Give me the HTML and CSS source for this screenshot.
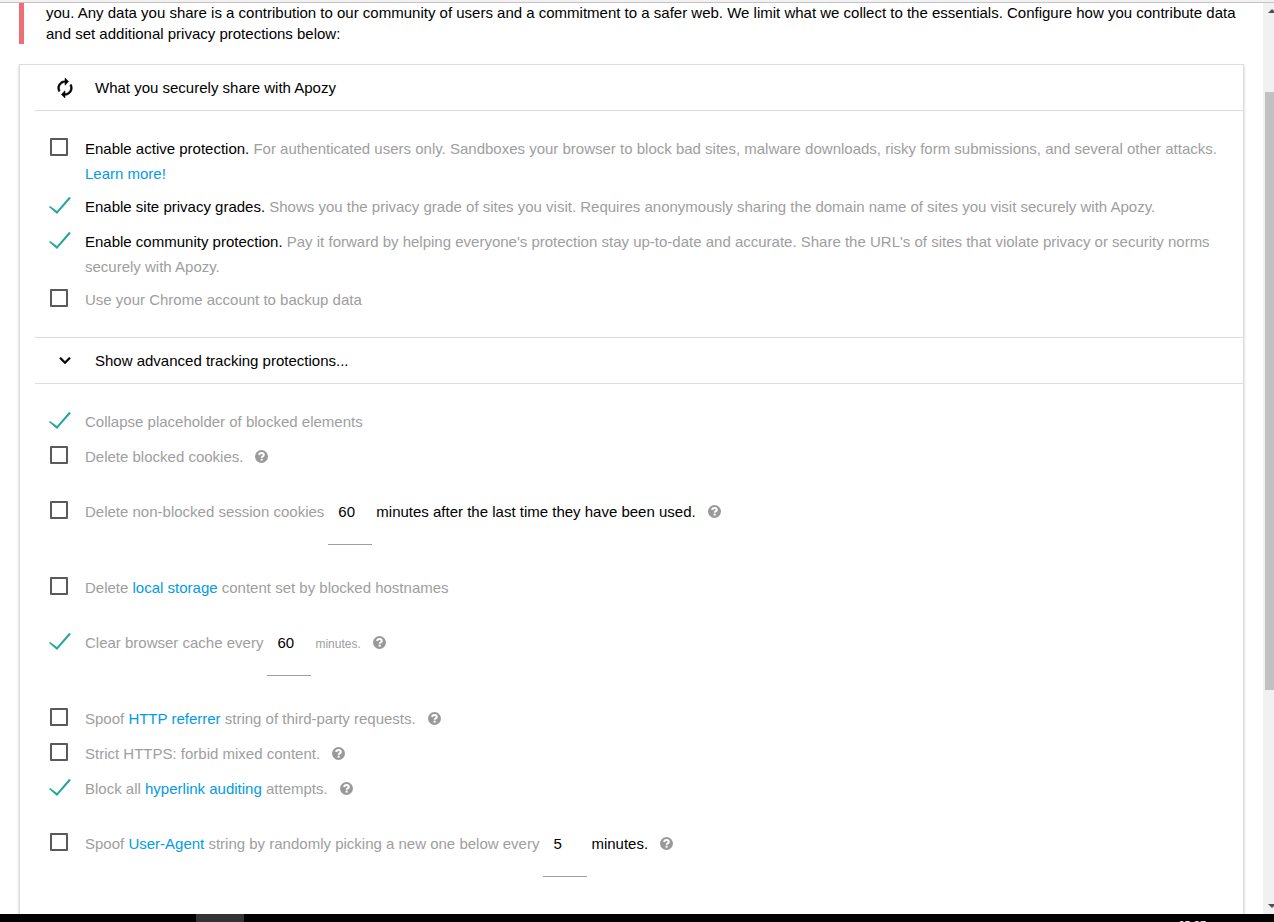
FILE: index.html
```html
<!DOCTYPE html>
<html lang="en">
<head>
<meta charset="utf-8">
<meta name="viewport" content="width=device-width, initial-scale=1">
<title>Apozy settings</title>
<link rel="stylesheet" href="styles.css">
</head>
<body>
<svg class="symbols" aria-hidden="true">
  <symbol id="help" viewBox="0 0 13 13">
    <circle cx="6.5" cy="6.5" r="6.5" fill="#999"/>
    <path d="M4.1 5C4.3 3.600 5.200 3 6.500 3c1.500 0 2.300.8 2.300 1.900 0 1.500-2.100 1.500-2.100 2.900" fill="none" stroke="#fff" stroke-width="2"/>
    <rect x="5.600" y="8.700" width="2.100" height="1.900" fill="#fff"/>
  </symbol>
</svg>
<div class="toolbar-edge"></div>
<div class="viewport">
  <main class="page">
    <blockquote class="intro">you. Any data you share is a contribution to our community of users and a commitment to a safer web. We limit what we collect to the essentials. Configure how you contribute data and set additional privacy protections below:</blockquote>
    <section class="card">
      <button type="button" class="section-head">
        <svg class="head-icon" viewBox="0 0 24 24"><path d="M12 6v3l4-4-4-4v3c-4.420 0-8 3.580-8 8 0 1.570.460 3.030 1.240 4.260L6.700 14.800c-.450-.830-.700-1.790-.700-2.800 0-3.310 2.690-6 6-6zm6.760 1.740L17.300 9.200c.440.840.700 1.790.700 2.800 0 3.310-2.690 6-6 6v-3l-4 4 4 4v-3c4.420 0 8-3.580 8-8 0-1.570-.460-3.030-1.240-4.260z"/></svg>
        <span>What you securely share with Apozy</span>
      </button>
      <div class="options">
        <div class="option wrapped">
          <input type="checkbox" class="check" id="active">
          <div class="text"><label for="active"><span class="strong">Enable active protection.</span> For authenticated users only. Sandboxes your browser to block bad sites, malware downloads, risky form submissions, and several other attacks.</label> <a href="#">Learn more!</a></div>
        </div>
        <div class="option">
          <input type="checkbox" class="check" id="grades" checked>
          <div class="text"><label for="grades"><span class="strong">Enable site privacy grades.</span> Shows you the privacy grade of sites you visit. Requires anonymously sharing the domain name of sites you visit securely with Apozy.</label></div>
        </div>
        <div class="option wrapped">
          <input type="checkbox" class="check" id="community" checked>
          <div class="text"><label for="community"><span class="strong">Enable community protection.</span> Pay it forward by helping everyone's protection stay up-to-date and accurate. Share the URL's of sites that violate privacy or security norms securely with Apozy.</label></div>
        </div>
        <div class="option">
          <input type="checkbox" class="check" id="backup">
          <div class="text"><label for="backup">Use your Chrome account to backup data</label></div>
        </div>
      </div>
      <button type="button" class="section-head ruled">
        <svg class="head-icon" viewBox="0 0 24 24"><path d="M7.410 7.840L12 12.420l4.590-4.580L18 9.250l-6 6-6-6z"/></svg>
        <span>Show advanced tracking protections...</span>
      </button>
      <div class="options">
        <div class="option">
          <input type="checkbox" class="check" id="collapse" checked>
          <div class="text"><label for="collapse">Collapse placeholder of blocked elements</label></div>
        </div>
        <div class="option">
          <input type="checkbox" class="check" id="cookies">
          <div class="text"><label for="cookies">Delete blocked cookies.</label><button type="button" class="help" aria-label="Help"><svg><use href="#help"/></svg></button></div>
        </div>
        <div class="option timed">
          <input type="checkbox" class="check" id="session">
          <div class="text"><label for="session">Delete non-blocked session cookies</label><input type="text" class="minutes" value="60" aria-label="Session cookie minutes"><span class="strong">minutes after the last time they have been used.</span><button type="button" class="help" aria-label="Help"><svg><use href="#help"/></svg></button></div>
        </div>
        <div class="option">
          <input type="checkbox" class="check" id="storage">
          <div class="text"><label for="storage">Delete <a href="#">local storage</a> content set by blocked hostnames</label></div>
        </div>
        <div class="option timed">
          <input type="checkbox" class="check" id="cache" checked>
          <div class="text"><label for="cache">Clear browser cache every</label><input type="text" class="minutes" value="60" aria-label="Cache minutes"><span class="small">minutes.</span><button type="button" class="help" aria-label="Help"><svg><use href="#help"/></svg></button></div>
        </div>
        <div class="option">
          <input type="checkbox" class="check" id="referrer">
          <div class="text"><label for="referrer">Spoof <a href="#">HTTP referrer</a> string of third-party requests.</label><button type="button" class="help" aria-label="Help"><svg><use href="#help"/></svg></button></div>
        </div>
        <div class="option">
          <input type="checkbox" class="check" id="https">
          <div class="text"><label for="https">Strict HTTPS: forbid mixed content.</label><button type="button" class="help" aria-label="Help"><svg><use href="#help"/></svg></button></div>
        </div>
        <div class="option">
          <input type="checkbox" class="check" id="auditing" checked>
          <div class="text"><label for="auditing">Block all <a href="#">hyperlink auditing</a> attempts.</label><button type="button" class="help" aria-label="Help"><svg><use href="#help"/></svg></button></div>
        </div>
        <div class="option timed">
          <input type="checkbox" class="check" id="agent">
          <div class="text"><label for="agent">Spoof <a href="#">User-Agent</a> string by randomly picking a new one below every</label><input type="text" class="minutes" value="5" aria-label="User-Agent minutes"><span class="strong">minutes.</span><button type="button" class="help" aria-label="Help"><svg><use href="#help"/></svg></button></div>
        </div>
      </div>
    </section>
  </main>
  <div class="scrollbar" aria-hidden="true">
    <svg class="arrow" viewBox="0 0 6 4"><path d="M0 4L4 0l4 4z"/></svg>
    <div class="before"></div>
    <div class="thumb"></div>
    <div class="after"></div>
    <svg class="arrow" viewBox="0 0 6 4"><path d="M0 0h8L4 4z"/></svg>
  </div>
</div>
<footer class="taskbar">
  <div class="task"></div>
  <div class="clock">05:37</div>
</footer>
</body>
</html>
```
FILE: styles.css
```css
* {
  box-sizing: border-box;
}

body {
  margin: 0;
  height: 100vh;
  display: flex;
  flex-direction: column;
  overflow: hidden;
  background: #fff;
  color: #000;
  font-family: "Liberation Sans", Arial, sans-serif;
  font-size: 15px;
  line-height: 25px;
}

button,
input {
  margin: 0;
  padding: 0;
  border: 0;
  border-radius: 0;
  background: none;
  color: inherit;
  font: inherit;
}

a {
  color: #039be5;
  text-decoration: none;
}

.symbols {
  display: none;
}

.toolbar-edge {
  flex: none;
  height: 3px;
  background: #f2f0f0;
  border-bottom: 1px solid #c4c2c2;
}

.viewport {
  flex: 1;
  min-height: 0;
  display: flex;
}

.page {
  flex: 1;
  min-width: 0;
  overflow: hidden;
  padding: 0 19px;
}

.intro {
  margin: -1px 0 20px;
  padding-left: 22px;
  border-left: 5px solid #ee6e73;
  line-height: 21px;
}

.card {
  padding: 0 0 60px 15px;
  border: 1px solid #dcdcdc;
  box-shadow: 0 2px 3px rgba(0, 0, 0, 0.2);
}

.section-head {
  display: flex;
  align-items: center;
  gap: 19px;
  width: 100%;
  height: 46px;
  padding-left: 19px;
  border-bottom: 1px solid #ddd;
  text-align: left;
}

.section-head.ruled {
  height: 47px;
  border-top: 1px solid #ddd;
}

.head-icon {
  width: 22px;
  height: 22px;
  stroke: #000;
  stroke-width: 0.5;
}

.options {
  padding: 25px 15px 15px 14px;
}

.option {
  display: flex;
  align-items: flex-start;
  margin-bottom: 10px;
  color: #9e9e9e;
}

.option.wrapped {
  margin-bottom: 8px;
}

.option.timed {
  margin-top: 30px;
  margin-bottom: 30px;
}

.check {
  appearance: none;
  flex: none;
  width: 18px;
  height: 18px;
  margin: 2px 17px 0 1px;
  border: 2px solid #5a5a5a;
  border-radius: 1px;
}

.check:checked {
  width: 22px;
  height: 17px;
  margin: 3px 14px 0 0;
  border: 0;
  background: #26a69a;
  clip-path: polygon(0 10px, 1px 9px, 8px 14px, 20px 0, 22px 1px, 8px 17px);
}

.text {
  min-width: 0;
}

.timed .text {
  display: flex;
  align-items: baseline;
}

.strong {
  color: #000;
}

.small {
  font-size: 12px;
}

.minutes {
  width: 44px;
  height: 46px;
  margin: 0 4px;
  padding: 0 0 20px 10px;
  border-bottom: 1px solid #9e9e9e;
  color: #000;
}

.help {
  height: 25px;
  margin-left: 12px;
  vertical-align: top;
}

.timed .help {
  align-self: flex-start;
}

.help svg {
  display: block;
  width: 13px;
  height: 13px;
}

.scrollbar {
  flex: none;
  display: flex;
  flex-direction: column;
  width: 11px;
  padding: 6px 0;
  background: #f1f1f1;
}

.arrow {
  align-self: flex-end;
  width: 6px;
  height: 4px;
  fill: #505050;
}

.before {
  flex: 79;
}

.thumb {
  flex: 598;
  margin-left: 2px;
  background: #c1c1c1;
}

.after {
  flex: 214;
}

.taskbar {
  flex: none;
  display: flex;
  justify-content: space-between;
  height: 8px;
  padding: 0 68px 0 196px;
  overflow: hidden;
  background: #000;
}

.task {
  width: 48px;
  background: #333;
}

.clock {
  padding-top: 4px;
  color: #fff;
  font-size: 11px;
  line-height: 14px;
}
```
